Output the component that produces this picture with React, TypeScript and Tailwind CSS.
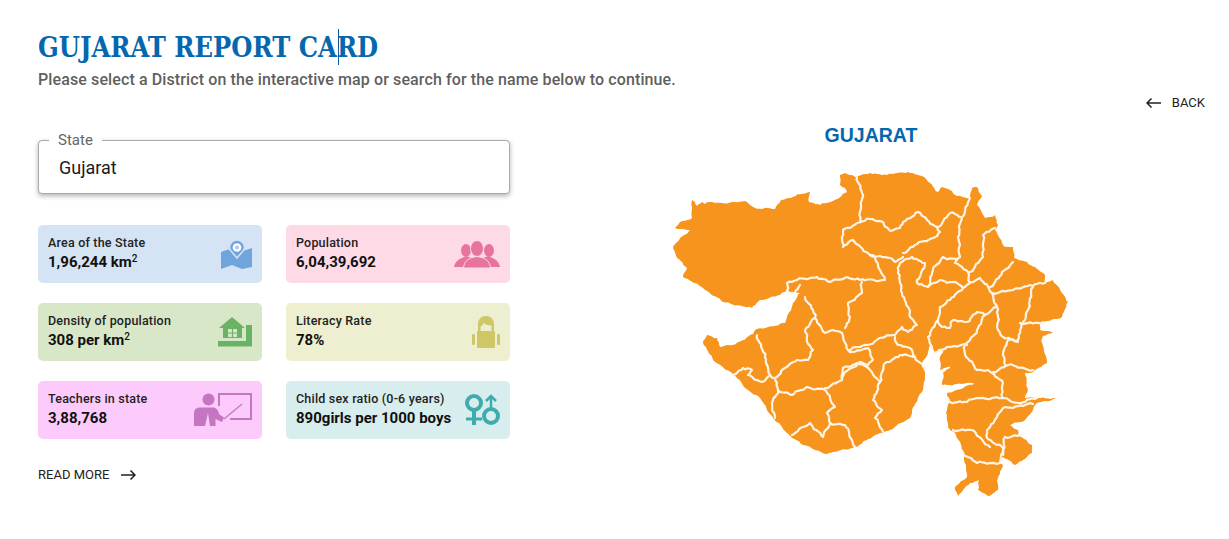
import React from 'react';

const outline = [
  692,200, 695,202, 697,206, 702,202, 705,204, 712,202, 722,203, 735,202, 747,202, 755,208, 775,209, 781,200, 810,192,
  809,202, 820,205, 833,201, 847,192, 845,188, 840,185, 840,175, 845,173, 855,177, 870,173, 887,175, 897,173, 908,172,
  922,176, 930,183, 938,192, 942,187, 950,190, 955,195, 970,198, 972,188, 977,187, 982,196, 977,205, 985,218, 995,215,
  998,225, 995,230, 1005,247, 1013,247, 1014,258, 1027,262, 1045,275, 1045,283, 1053,280, 1068,302, 1062,317, 1040,323,
  1040,330, 1053,333, 1043,336, 1042,343, 1047,363, 1033,372, 1025,373, 1028,390, 1025,398, 1038,398, 1058,398, 1037,403,
  1033,410, 1025,420, 1010,425, 1018,430, 1018,435, 1032,445, 1032,453, 1015,465, 1003,457, 1000,463, 1003,465, 998,478,
  998,490, 988,496, 978,490, 979,480, 970,483, 958,496, 955,487, 967,477, 964,453, 955,433, 948,427, 946,413, 950,400,
  947,393, 977,383, 942,385, 943,373, 953,365, 940,370, 940,357, 945,349, 935,353, 930,342, 928,352, 922,365, 925,372,
  923,390, 912,410, 910,418, 890,430, 880,433, 855,447, 827,454, 803,445, 787,433, 773,418, 760,398, 748,390, 732,373,
  713,360, 703,343, 707,335, 717,338, 720,347, 733,345, 753,334, 755,330, 768,327, 785,323, 793,303, 800,293, 787,291,
  780,295, 760,300, 752,308, 723,302, 703,288, 683,277, 687,268, 677,258, 673,248, 680,238, 690,230, 675,228, 680,222,
  692,218,
];

const districts = [
  [787,291, 787,283, 797,280, 817,277, 830,282, 847,277, 860,280, 885,280, 880,270, 875,257, 870,255],
  [787,291, 795,293, 800,285],
  [870,255, 890,258, 895,262, 903,257],
  [903,253, 915,245, 933,238, 940,232, 937,227, 927,220, 918,212, 903,222, 900,228, 890,231, 883,222, 870,219, 857,223, 843,230, 843,247, 853,240, 870,255],
  [857,177, 862,193, 860,222],
  [862,282, 862,293, 848,303, 850,317, 845,328],
  [805,297, 813,310, 815,318, 825,333, 833,330, 842,333, 848,350, 858,347, 868,345, 880,338, 895,335, 902,327, 908,332, 917,325, 910,317, 908,307, 902,293, 898,273, 900,263, 912,257, 925,263, 917,283, 928,287, 940,280, 957,283, 963,288, 950,300, 940,307, 938,320, 928,337, 932,350],
  [815,318, 805,330, 807,342, 813,350, 808,360, 797,360, 785,368, 775,378],
  [848,350, 853,352, 868,348, 873,360, 868,365, 857,363, 843,368, 842,380],
  [895,337, 898,345, 910,348, 915,357, 900,355, 885,363, 880,382],
  [915,357, 925,368],
  [967,345, 947,347, 935,353],
  [938,320, 942,327, 950,328, 953,320, 967,322, 977,312, 985,315, 995,307],
  [928,287, 933,270, 943,257, 957,260],
  [938,227, 950,213, 962,217, 958,237, 960,257, 955,263, 968,272, 970,283, 963,288],
  [962,217, 970,198],
  [970,272, 983,257, 983,235, 995,228],
  [970,282, 980,278, 992,293, 997,307, 998,330, 1003,337, 1018,342],
  [990,287, 1013,262],
  [992,293, 1013,290, 1030,285, 1045,283],
  [1033,287, 1025,320, 1020,330, 1018,340, 1008,340, 1003,355, 1005,365],
  [1020,323, 1040,323],
  [985,315, 977,330, 970,340, 965,345],
  [965,345, 965,355, 977,370, 988,370, 1003,383, 1002,397],
  [993,372, 1008,365, 1033,370],
  [950,402, 967,402, 977,398, 1002,398, 1018,403, 1037,398],
  [1033,404, 1003,408, 997,417, 987,430, 987,438, 1003,448],
  [953,430, 972,430, 990,447],
  [1005,437, 1022,435],
  [1005,437, 1003,455],
  [963,453, 977,463, 1000,463, 1003,450],
  [757,335, 765,357, 770,375, 762,382, 748,375, 752,370, 743,368, 733,375],
  [770,375, 775,378, 778,390, 772,403, 775,418],
  [778,390, 792,395, 807,387, 825,390, 835,407, 827,413, 830,423, 823,437, 810,423, 792,435],
  [830,423, 845,425, 855,447],
  [825,388, 842,380, 845,372, 860,362, 870,370, 880,382, 873,400, 882,410, 875,418, 883,432],
  [867,367, 860,362],
];

// break the straight traced segments up so the borders look hand drawn
const wobble = (pts: number[], amp: number, close = false) => {
  let d = '';
  let t = 0;
  for (let i = 0; i < pts.length - 2; i += 2) {
    const [x1, y1, x2, y2] = [pts[i], pts[i + 1], pts[i + 2], pts[i + 3]];
    const len = Math.hypot(x2 - x1, y2 - y1);
    const n = Math.max(1, Math.round(len / 2.5));
    if (i === 0) d += `M${x1} ${y1}`;
    for (let k = 1; k <= n; k++) {
      t += 1;
      const f = k / n;
      const off = k === n ? 0 : amp * (Math.sin(t * 1.3) + Math.sin(t * 0.47 + 1) + 0.5 * Math.sin(t * 2.9));
      const x = x1 + (x2 - x1) * f - ((y2 - y1) / len) * off;
      const y = y1 + (y2 - y1) * f + ((x2 - x1) / len) * off;
      d += `L${x.toFixed(1)} ${y.toFixed(1)}`;
    }
  }
  return close ? d + 'Z' : d;
};

const MapIcon = () => (
  <svg width="31" height="29" viewBox="0 0 31 29">
    <path d="M0 12L7 9.500L15 13L22 11L31 8V27L21 29L11 25L0 29Z" fill="#6fa5dc" />
    <path d="M16 18C12 13 8.500 10.500 8.500 7.500A7.500 7.500 0 0 1 23.500 7.500C23.500 10.500 20 13 16 18Z" fill="#6fa5dc" stroke="#d5e4f4" strokeWidth="1.500" />
    <circle cx="16" cy="7.500" r="4.300" fill="#fff" />
    <circle cx="16" cy="7.500" r="2" fill="#a9c9ec" />
  </svg>
);

const PeopleIcon = () => (
  <svg width="46" height="27" viewBox="0 0 46 27">
    <ellipse cx="12" cy="9.500" rx="5" ry="6.500" fill="#e6749f" />
    <ellipse cx="35" cy="9.500" rx="5" ry="6.500" fill="#e6749f" />
    <path d="M0 26C1 20 6 17 12 15.500C17 16 23 19 24 26Z" fill="#e6749f" />
    <path d="M22 26C23 19 29 16 35 15.500C40 17 45 20 46 26Z" fill="#e6749f" />
    <ellipse cx="23" cy="7.500" rx="6.500" ry="8" fill="#e6749f" stroke="#fed9e6" strokeWidth="1" />
    <path d="M9.500 27C10 20 15 16.500 23 15.500C31 16.500 36 20 36.500 27Z" fill="#e6749f" stroke="#fed9e6" strokeWidth="1" />
  </svg>
);

const HomeIcon = () => (
  <svg width="34" height="30" viewBox="0 0 34 30">
    <path d="M14 0L27 11H24V21H5V11H1Z" fill="#6ab364" />
    <path d="M0 24H28V8H34V29.500H0Z" fill="#6ab364" />
    <rect x="10" y="12" width="9" height="8" fill="#d9e7c9" />
    <path d="M14.500 12V20M10 16H19" stroke="#6ab364" strokeWidth="1.200" />
  </svg>
);

const GirlIcon = () => (
  <svg width="28" height="32" viewBox="0 0 28 32">
    <path d="M6 15V8.500C6 3 9.500 0 14 0C18.500 0 22 3 22 8.500V15H19.500V9.500C16 9.500 13 8 11.500 7C11 9 10 10 8.500 10.500V15Z" fill="#cfc766" />
    <rect x="5" y="15" width="18" height="17" rx="1" fill="#cfc766" />
    <rect x="0" y="18" width="3" height="11" rx="1" fill="#cfc766" />
    <rect x="25" y="18" width="3" height="11" rx="1" fill="#cfc766" />
  </svg>
);

const TeacherIcon = () => (
  <svg width="58" height="34" viewBox="0 0 58 34">
    <circle cx="14.500" cy="6.500" r="6" fill="#c576c2" />
    <path d="M0 33V20C0 16 3 14.500 6 14.500H19C22 14.500 24 17 25.500 21.500L30 24.500L28 29L21.500 26V33H16L14 20L11 33H3C1 33 0 33 0 33Z" fill="#c576c2" />
    <path d="M25 13V1H57V26H36" fill="none" stroke="#c576c2" strokeWidth="2" />
    <path d="M30 26L48 11" stroke="#c576c2" strokeWidth="1.300" />
  </svg>
);

const GenderIcon = () => (
  <svg width="35" height="32" viewBox="0 0 35 32" fill="none" stroke="#3fabad" strokeWidth="4">
    <circle cx="9" cy="9" r="7" />
    <path d="M9 16V31" />
    <path d="M1 25H17" strokeWidth="3" />
    <circle cx="26" cy="22" r="7" />
    <path d="M26 15V2" strokeWidth="2.500" />
    <path d="M21 7L26 2L31 7" strokeWidth="2.500" />
  </svg>
);

const cards = [
  { title: 'Area of the State', value: '1,96,244 km', sup: true, bg: 'bg-[#d5e4f4]', icon: <MapIcon /> },
  { title: 'Population', value: '6,04,39,692', sup: false, bg: 'bg-[#fed9e6]', icon: <PeopleIcon /> },
  { title: 'Density of population', value: '308 per km', sup: true, bg: 'bg-[#d9e7c9]', icon: <HomeIcon /> },
  { title: 'Literacy Rate', value: '78%', sup: false, bg: 'bg-[#eeeed0]', icon: <GirlIcon /> },
  { title: 'Teachers in state', value: '3,88,768', sup: false, bg: 'bg-[#fdcbfb]', icon: <TeacherIcon /> },
  { title: 'Child sex ratio (0-6 years)', value: '890girls per 1000 boys', sup: false, bg: 'bg-[#d8eeee]', icon: <GenderIcon /> },
];

export default function App() {
  return (
    <div className="h-[539px] overflow-hidden bg-white font-['Roboto',sans-serif]">
      <div className="pl-[38px] pt-[30px]">
        <h1 className="relative w-fit font-['DejaVu_Serif',serif] text-[27px] font-bold leading-[36px] text-[#0568ae] [font-stretch:condensed]">
          GUJARAT REPORT CARD
          <span className="absolute left-[300px] top-[-1px] h-[36px] w-px bg-[#0b5d9e]" />
        </h1>
        <p className="mt-[3px] text-base font-medium leading-[22px] tracking-[0.11px] text-[#5f5f5f]">
          Please select a District on the interactive map or search for the name below to continue.
        </p>
      </div>

      <div className="flex justify-end pr-[24px] pt-[1px]">
        <button className="flex h-[22px] items-center gap-[11px] text-[13px] text-[#222]">
          <svg width="15" height="10" viewBox="0 0 15 10" fill="none" stroke="#222" strokeWidth="1.500">
            <path d="M15 5H1M5.500 0.500L1 5L5.500 9.500" />
          </svg>
          BACK
        </button>
      </div>

      <div className="flex">
        <div className="ml-[38px] w-[472px] pt-[26px]">
          <div className="relative h-[54px] rounded border border-[#a9a9a9] bg-white pl-[20px] pt-[15px] text-lg leading-[24px] text-[#1a1a1a] shadow-[0_2px_5px_rgba(0,0,0,0.3)]">
            Gujarat
            <span className="absolute left-[10px] top-[-9px] bg-white px-[9px] text-[15px] leading-[16px] text-[#666]">State</span>
          </div>

          <div className="mt-[31px] grid grid-cols-2 gap-x-[24px] gap-y-[20px]">
            {cards.map((c) => (
              <div key={c.title} className={`flex h-[58px] items-center justify-between rounded-[5px] pl-[10px] pr-[10px] ${c.bg}`}>
                <div className="pb-[2px]">
                  <div className="text-[12.500px] font-medium leading-[18px] tracking-[0.2px] text-[#222]">{c.title}</div>
                  <div className="text-[15px] font-bold leading-[20px] text-[#111]">
                    {c.value}
                    {c.sup && <sup className="text-[10px] font-medium">2</sup>}
                  </div>
                </div>
                {c.icon}
              </div>
            ))}
          </div>

          <button className="mt-[26px] flex items-center gap-[12px] text-[13px] leading-[20px] text-[#222]">
            READ MORE
            <svg width="15" height="10" viewBox="0 0 15 10" fill="none" stroke="#222" strokeWidth="1.500">
              <path d="M0 5H14M9.500 0.500L14 5L9.500 9.500" />
            </svg>
          </button>
        </div>

        <div className="flex-1 pl-[150px]">
          <div className="flex w-[420px] flex-col items-center">
            <h2 className="pl-[2px] pt-[8px] font-['Liberation_Sans',sans-serif] text-[19.500px] font-bold leading-[26px] text-[#0568ae]">GUJARAT</h2>
            <svg width="420" height="340" viewBox="660 160 420 340" className="mt-[12px]">
              <path d={wobble([...outline, outline[0], outline[1]], 0.45, true)} fill="#f7941d" />
              <g fill="none" stroke="#fff4e4" strokeWidth="2.200" strokeLinejoin="round" strokeLinecap="round">
                {districts.map((pts, i) => (
                  <path key={i} d={wobble(pts, 0.6)} />
                ))}
              </g>
            </svg>
          </div>
        </div>
      </div>
    </div>
  );
}
